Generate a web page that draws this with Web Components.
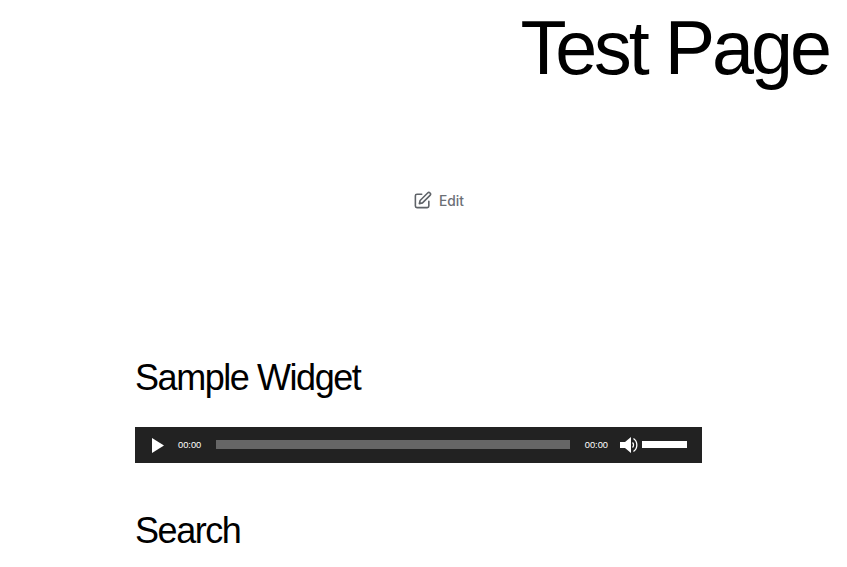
<!DOCTYPE html>
<html><head><meta charset="utf-8"><style>html,body{margin:0;padding:0;background:#fff;overflow:hidden;height:567px}body{font-family:"Liberation Sans",Arial,sans-serif}</style></head><body>
<template id="t-title"><style>:host{display:block;padding:0 18px 0 0;height:170px;text-align:right}h1{margin:0;font:400 75.5px/96px "Liberation Sans",sans-serif;letter-spacing:-3.02px;color:#000}</style><h1><slot></slot></h1></template>
<template id="t-edit"><style>:host{display:flex;align-items:center;justify-content:center;gap:7px;height:60px;font:500 13.8px/20px Inter,sans-serif;color:#6b6f76;padding-left:30px}svg{width:19px;height:19px;display:block;margin-top:1px}span{margin-top:2px}</style><svg viewBox="0 0 24 24" fill="none" stroke="#5f6368" stroke-width="2" stroke-linecap="round" stroke-linejoin="round"><path d="M11 4H5a2 2 0 0 0-2 2v13a2 2 0 0 0 2 2h13a2 2 0 0 0 2-2v-6"/><path d="M18.500 2.500a2.100 2.100 0 0 1 3 3L12 15l-4 1 1-4z"/></svg><span><slot></slot></span></template>
<template id="t-head"><style>:host{display:block}h2{margin:0;font:400 36px/44px "Liberation Sans",sans-serif;letter-spacing:-1.44px;color:#000}</style><h2><slot></slot></h2></template>
<template id="t-audio"><style>:host{display:flex;align-items:center;height:36px;width:567px;background:#222;color:#fff;font:9.3px "Liberation Sans",sans-serif;box-sizing:border-box}
.play{width:12px;margin-left:17px;display:block}.t1{margin-left:14px}.track{flex:1;height:9px;background:#666;margin:0 15px 1px 15px}.vol{margin-left:12px;width:18px;display:block}.vbar{width:45px;height:7px;background:#fff;margin-left:4px;margin-right:15px;margin-bottom:1px}</style>
<svg class="play" viewBox="0 0 12 15" height="15"><path d="M0 0L12 7.500L0 15Z" fill="#fff"/></svg><span class="t1">00:00</span><div class="track"></div><span class="t2">00:00</span><svg class="vol" viewBox="0 0 18 18" height="18"><path d="M0 6h5l6-5v16l-6-5H0z" fill="#fff"/><path d="M12.500 6.500a3.500 3.500 0 0 1 0 5M13.500 2.500a8 8 0 0 1 0 13" fill="none" stroke="#fff" stroke-width="1.300"/></svg><div class="vbar"></div></template>
<template id="t-content"><style>:host{display:block;padding:0 145px 0 135px}</style><slot></slot></template>
<script>
for(const [n,t] of [["x-title","t-title"],["x-edit","t-edit"],["x-head","t-head"],["x-audio","t-audio"],["x-content","t-content"]]){customElements.define(n,class extends HTMLElement{constructor(){super();this.attachShadow({mode:"open"}).appendChild(document.getElementById(t).content.cloneNode(true))}})}
</script>
<x-title>Test Page</x-title>
<x-edit>Edit</x-edit>
<x-content style="margin-top:126px">
<x-head>Sample Widget</x-head>
<x-audio style="margin-top:27px">
</x-audio>
<x-head style="margin-top:46px">Search</x-head>
</x-content>
</body></html>
